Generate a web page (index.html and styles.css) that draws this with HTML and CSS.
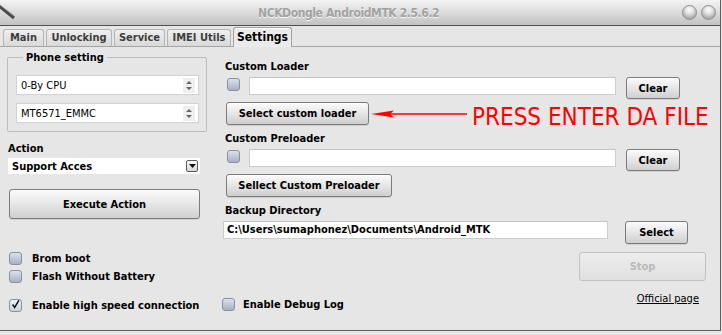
FILE: index.html
```html
<!DOCTYPE html>
<html>
<head>
  <meta charset="utf-8">
  <title>NCKDongle AndroidMTK</title>
  <link rel="stylesheet" href="styles.css">
</head>
<body>

<div class="window">

  <div class="titlebar">
    <svg class="appicon" width="18" height="20" viewBox="0 0 18 20">
      <line x1="-1" y1="6" x2="14" y2="18" stroke="#4a4a4a" stroke-width="3"/>
      <line x1="0" y1="5" x2="14" y2="16" stroke="#8a8a8a" stroke-width="1"/>
    </svg>
    <span class="title">NCKDongle AndroidMTK 2.5.6.2</span>
    <div class="winbtns">
      <span class="orb"></span>
      <span class="orb"></span>
    </div>
  </div>

  <div class="tabs">
    <span class="tab w-main">Main</span>
    <span class="tab w-unlock">Unlocking</span>
    <span class="tab w-service">Service</span>
    <span class="tab w-imei">IMEI Utils</span>
    <span class="tab w-settings active">Settings</span>
  </div>

  <div class="panel">

    <!-- left side -->
    <div class="left">
      <fieldset class="group">
        <legend>Phone setting</legend>
        <div class="spin">
          <span>0-By CPU</span>
          <svg class="spin-arrows" width="8" height="11" viewBox="0 0 8 11"><path d="M4 1 L7 4 L1 4 Z M4 10 L7 7 L1 7 Z" fill="#666"/></svg>
        </div>
        <div class="spin second">
          <span>MT6571_EMMC</span>
          <svg class="spin-arrows" width="8" height="11" viewBox="0 0 8 11"><path d="M4 1 L7 4 L1 4 Z M4 10 L7 7 L1 7 Z" fill="#666"/></svg>
        </div>
      </fieldset>

      <div class="label action-label">Action</div>
      <div class="combo">
        <span>Support Acces</span>
        <span class="drop"><svg width="7" height="4" viewBox="0 0 7 4"><path d="M0 0 L7 0 L3.5 4 Z" fill="#111"/></svg></span>
      </div>

      <button class="btn execute">Execute Action</button>

      <div class="checks">
        <div class="check"><span class="box"></span>Brom boot</div>
        <div class="check"><span class="box"></span>Flash Without Battery</div>
      </div>
      <div class="check speed">
        <span class="box checked"><svg width="13" height="13" viewBox="0 0 13 13"><path d="M3 6.5 L5.5 10 L10.5 1.5" fill="none" stroke="#111" stroke-width="1.8"/></svg></span>
        Enable high speed connection
      </div>
    </div>

    <!-- right side -->
    <div class="right">
      <div class="label first">Custom Loader</div>
      <div class="file-row">
        <span class="box"></span>
        <div class="field"></div>
        <button class="btn clear">Clear</button>
      </div>
      <div class="pick-row">
        <button class="btn pick">Select custom loader</button>
        <svg class="arrow" width="100" height="10" viewBox="0 0 100 10">
          <line x1="10" y1="5" x2="97" y2="5" stroke="#ff0000" stroke-width="1.6"/>
          <path d="M1 5 L24 1.6 L20 5 L24 8.4 Z" fill="#ff0000"/>
        </svg>
        <span class="note">PRESS ENTER DA FILE</span>
      </div>

      <div class="label">Custom Preloader</div>
      <div class="file-row">
        <span class="box"></span>
        <div class="field"></div>
        <button class="btn clear">Clear</button>
      </div>
      <div class="pick-row">
        <button class="btn pick wide">Sellect Custom Preloader</button>
      </div>

      <div class="label">Backup Directory</div>
      <div class="dir-row">
        <div class="field dir">C:\Users\sumaphonez\Documents\Android_MTK</div>
        <button class="btn select">Select</button>
      </div>

      <button class="btn stop" disabled>Stop</button>

      <div class="bottom-row">
        <div class="check"><span class="box"></span>Enable Debug Log</div>
        <a class="link" href="#">Official page</a>
      </div>
    </div>

  </div>
</div>

</body>
</html>
```

FILE: styles.css
```css
body {
  margin: 0;
  background: #e6e6e6;
  font-family: Tahoma, "DejaVu Sans Condensed", "DejaVu Sans", sans-serif;
  font-size: 11px;
  color: #000;
}

.window {
  width: 721px;
  height: 331px;
  box-sizing: border-box;
  border-right: 1px solid #5f5f5f;
  border-bottom: 1px solid #5f5f5f;
  background: #e6e6e6;
  display: flex;
  flex-direction: column;
}

/* title bar */
.titlebar {
  height: 25px;
  flex: none;
  border-bottom: 1px solid #505050;
  background: linear-gradient(#f4f4f4, #dedede 45%, #c2c2c2);
  display: flex;
  align-items: center;
}

.appicon {
  flex: none;
  align-self: flex-start;
}

.title {
  margin-left: 240px;
  font-weight: bold;
  font-size: 12px;
  letter-spacing: -0.4px;
  color: #a3a3a3;
  text-shadow: 0 1px 0 #f6f6f6;
}

.winbtns {
  margin-left: auto;
  margin-right: 4px;
  display: flex;
  gap: 4px;
}

.orb {
  width: 15px;
  height: 15px;
  box-sizing: border-box;
  border-radius: 50%;
  border: 1px solid #8e8e8e;
  background: radial-gradient(circle at 50% 30%, #ffffff 0, #e2e2e2 35%, #a9a9a9 75%, #c9c9c9 100%);
}

/* tabs */
.tabs {
  height: 20px;
  flex: none;
  padding-left: 3px;
  display: flex;
  align-items: flex-end;
  gap: 2px;
  border-bottom: 1px solid #a6a6a6;
}

.tab {
  height: 17px;
  box-sizing: border-box;
  border: 1px solid #b4b4b4;
  border-bottom: none;
  border-radius: 3px 3px 0 0;
  background: linear-gradient(#efefef, #d9d9d9);
  color: #3d3d3d;
  font-weight: bold;
  line-height: 16px;
  text-align: center;
}

.tab.active {
  height: 20px;
  margin-bottom: -1px;
  background: #ebebeb;
  color: #000;
  font-size: 12px;
  line-height: 18px;
  border-color: #a0a0a0;
  box-shadow: inset 0 1px 0 #fff;
}

.w-main { width: 41px; }
.w-unlock { width: 66px; }
.w-service { width: 51px; }
.w-imei { width: 64px; }
.w-settings { width: 59px; }

/* panel */
.panel {
  flex: 1;
  display: grid;
  grid-template-columns: 200px 490px;
  column-gap: 15px;
  padding: 0 8px 0 7px;
}

.left,
.right {
  display: flex;
  flex-direction: column;
  align-items: flex-start;
}

.label {
  font-weight: bold;
  line-height: 13px;
  margin-left: 3px;
  margin-top: 7px;
}

.label.first {
  margin-top: 13px;
}

.group {
  width: 200px;
  box-sizing: border-box;
  margin: 4px 0 0;
  padding: 11px 7px 8px 8px;
  border: 1px solid #bcbcbc;
  border-radius: 2px;
}

.group legend {
  font-weight: bold;
  line-height: 13px;
  padding: 0 3px;
  margin-left: 7px;
}

.spin {
  height: 20px;
  box-sizing: border-box;
  border: 1px solid #d2d2d2;
  background: #fff;
  display: flex;
  align-items: center;
  justify-content: space-between;
  padding: 0 3px 0 4px;
}

.spin.second {
  margin-top: 8px;
}

.spin-arrows {
  background: #efefef;
  padding: 2px 2px;
}

.action-label {
  margin-left: 1px;
  margin-top: 10px;
}

.combo {
  width: 192px;
  height: 16px;
  box-sizing: border-box;
  margin-top: 3px;
  margin-left: 1px;
  background: #fff;
  display: flex;
  align-items: center;
  justify-content: space-between;
  padding: 0 2px 0 4px;
  font-weight: bold;
}

.drop {
  width: 12px;
  height: 12px;
  box-sizing: border-box;
  border: 1px solid #5a5a5a;
  border-radius: 2px;
  background: linear-gradient(#fdfdfd, #d6d6d6);
  display: flex;
  align-items: center;
  justify-content: center;
}

/* buttons */
.btn {
  font-family: inherit;
  font-size: 11px;
  font-weight: bold;
  color: #000;
  padding: 0;
  border: 1px solid #7b7b7b;
  border-radius: 3px;
  background: linear-gradient(#fbfbfb, #e6e6e6 50%, #cfcfcf);
  box-shadow: inset 0 1px 0 #fff, 0 1px 0 #cfcfcf;
}

.execute {
  width: 191px;
  height: 30px;
  margin: 15px 0 0 2px;
}

.clear {
  width: 54px;
  height: 22px;
  margin-left: 10px;
}

.pick {
  width: 143px;
  height: 23px;
  margin-left: 4px;
}

.pick.wide {
  width: 166px;
}

.select {
  width: 63px;
  height: 23px;
  margin-left: 17px;
}

.stop {
  width: 127px;
  height: 29px;
  margin: 8px 0 0 357px;
  color: #b9b9b9;
  border-color: #c2c2c2;
  background: linear-gradient(#ededed, #e0e0e0);
  box-shadow: none;
}

/* checkboxes */
.checks {
  margin-top: 30px;
}

.check {
  height: 18px;
  display: flex;
  align-items: center;
  font-weight: bold;
}

.left .check .box {
  margin: 0 10px 0 2px;
}

.check.speed {
  margin-top: 11px;
}

.box {
  width: 13px;
  height: 13px;
  flex: none;
  box-sizing: border-box;
  border: 1px solid #8891a3;
  border-radius: 3px;
  background: linear-gradient(#dde1ea, #a8b0c1);
}

.box.checked {
  background: linear-gradient(#f0f1f5, #cdd1db);
  display: flex;
}

.box.checked svg {
  margin: -2px 0 0 0;
}

/* right side rows */
.file-row {
  display: flex;
  align-items: flex-start;
  margin-top: 4px;
}

.file-row .box {
  margin: 1px 9px 0 5px;
}

.field {
  width: 367px;
  height: 18px;
  box-sizing: border-box;
  background: #fff;
  border: 1px solid #cdcdcd;
  border-top-color: #c3c3c3;
}

.pick-row {
  display: flex;
  align-items: center;
  margin-top: 3px;
  height: 23px;
}

.arrow {
  margin-left: 1px;
}

.note {
  margin: 7px 0 0 2px;
  color: #ff0000;
  font-size: 24px;
  line-height: 23px;
  white-space: nowrap;
  font-family: Tahoma, "DejaVu Sans Condensed", sans-serif;
}

.dir-row {
  display: flex;
  align-items: flex-start;
  margin-top: 4px;
}

.field.dir {
  width: 385px;
  margin-left: 1px;
  padding-left: 3px;
  font-weight: bold;
  line-height: 16px;
  white-space: nowrap;
  overflow: hidden;
}

.bottom-row {
  width: 100%;
  display: flex;
  justify-content: space-between;
  align-items: flex-start;
  margin-top: 10px;
}

.bottom-row .check {
  margin-top: 4px;
}

.bottom-row .check .box {
  margin-right: 8px;
}

.link {
  color: #000;
  line-height: 16px;
  margin-right: 13px;
}
```
